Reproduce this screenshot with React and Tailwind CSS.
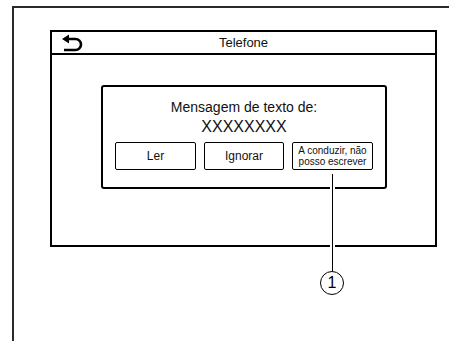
import React from "react";

function BackIcon() {
  return (
    <svg width="22" height="18" viewBox="0 0 22 18" className="ml-[9px]">
      <path d="M1 5 L8 0.5 L8 9.5 Z" fill="#000" />
      <path
        d="M7 5 H14.5 A5.5 5.5 0 0 1 14.5 16 H3"
        fill="none"
        stroke="#000"
        strokeWidth="2.6"
      />
    </svg>
  );
}

export default function App() {
  return (
    <div
      className="w-[449px] h-[341px] bg-white overflow-hidden relative"
      style={{ fontFamily: '"Liberation Sans", Arial, sans-serif' }}
    >
      {/* outer frame */}
      <div className="ml-[12px] mt-[6px] h-[335px] border-l-[2px] border-t-[2px] border-[#2a2a2a] pl-[36px] pt-[22px]">
        {/* screen */}
        <div className="w-[387px] h-[217px] border-[2px] border-black flex flex-col">
          <div className="h-[23px] border-b-[2px] border-black flex items-center relative">
            <BackIcon />
            <p className="absolute inset-0 flex items-center justify-center text-[13px] text-[#111]">
              Telefone
            </p>
          </div>
          <div className="pl-[49px] pt-[30px]">
            {/* dialog */}
            <div className="w-[286px] h-[104px] border-[2px] border-black rounded-[3px] flex flex-col items-center pt-[11px] text-[#111]">
              <p className="text-[14px] leading-[18px]">Mensagem de texto de:</p>
              <p className="text-[16px] leading-[20px] mt-[1px]">XXXXXXXX</p>
              <div className="flex gap-[8px] mt-[5px]">
                <div className="w-[81px] h-[28px] border-[1.5px] border-black rounded-[2px] flex items-center justify-center text-[12px]">
                  Ler
                </div>
                <div className="w-[80px] h-[28px] border-[1.5px] border-black rounded-[2px] flex items-center justify-center text-[12px]">
                  Ignorar
                </div>
                <div className="w-[81px] h-[28px] border-[1.5px] border-black rounded-[2px] flex items-center justify-center text-center text-[10px] leading-[11px]">
                  A conduzir, não<br />posso escrever
                </div>
              </div>
            </div>
          </div>
        </div>
      </div>
      {/* callout */}
      <div className="absolute left-[329.5px] top-[174px] box-content w-[1.5px] h-[97px] bg-black border-x-[2.5px] border-white" />
      <div className="absolute left-[320px] top-[271px] w-[24px] h-[24px] rounded-full border-[1.5px] border-black flex items-center justify-center text-[16px] leading-none">
        1
      </div>
    </div>
  );
}
